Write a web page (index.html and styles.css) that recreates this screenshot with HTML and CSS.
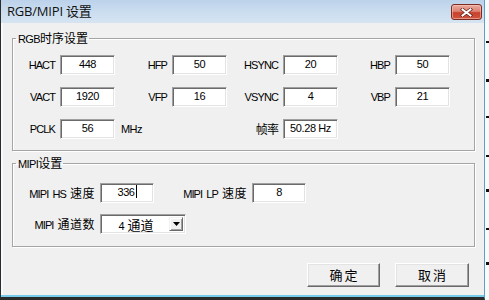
FILE: index.html
```html
<!DOCTYPE html>
<html lang="zh-CN">
<head>
<meta charset="utf-8">
<title>RGB/MIPI 设置</title>
<link rel="stylesheet" href="styles.css">
</head>
<body>
<div class="desk">
  <div class="window">
    <div class="titlebar">
      <span class="title">RGB/MIPI 设置</span>
      <span class="close">
        <svg width="13" height="9" viewBox="0 0 13 9"><path d="M2.5 1.5 L10.5 7.5 M10.5 1.5 L2.5 7.5" stroke="#5a1a12" stroke-width="3.4" stroke-linecap="square"/><path d="M2.5 1.5 L10.5 7.5 M10.5 1.5 L2.5 7.5" stroke="#fff" stroke-width="2" stroke-linecap="square"/></svg>
      </span>
    </div>
    <div class="client">
      <fieldset class="group rgb">
        <legend>RGB<span class="cjk">时序设置</span></legend>
        <div class="grid rgb-grid">
          <span class="lbl">HACT</span><span class="edit">448</span>
          <span class="lbl">HFP</span><span class="edit">50</span>
          <span class="lbl">HSYNC</span><span class="edit">20</span>
          <span class="lbl">HBP</span><span class="edit">50</span>

          <span class="lbl">VACT</span><span class="edit">1920</span>
          <span class="lbl">VFP</span><span class="edit">16</span>
          <span class="lbl">VSYNC</span><span class="edit">4</span>
          <span class="lbl">VBP</span><span class="edit">21</span>

          <span class="lbl">PCLK</span><span class="edit">56</span>
          <span class="unit">MHz</span><span class="blank"></span>
          <span class="lbl cjk">帧率</span><span class="edit">50.28 Hz</span>
        </div>
      </fieldset>

      <fieldset class="group mipi">
        <legend>MIPI<span class="cjk">设置</span></legend>
        <div class="grid mipi-grid">
          <span class="lbl">MIPI HS<span class="cjk sp">速度</span></span><span class="edit">336<span class="caret"></span></span>
          <span class="lbl">MIPI LP<span class="cjk sp">速度</span></span><span class="edit">8</span>

          <span class="lbl">MIPI<span class="cjk sp">通道数</span></span>
          <span class="combo">
            <span class="combo-text">4<span class="cjk">通道</span></span>
            <span class="combo-btn"><svg width="7" height="4" viewBox="0 0 7 4"><path d="M0 0 H7 L3.5 4 Z" fill="#000"/></svg></span>
          </span>
        </div>
      </fieldset>

      <div class="actions">
        <span class="btn ok">确定</span>
        <span class="btn cancel">取消</span>
      </div>
    </div>
  </div>
  <div class="edge"></div>
</div>
</body>
</html>
```

FILE: styles.css
```css
html, body {
  margin: 0;
  padding: 0;
  background: #ffffff;
}

body {
  font-family: "Liberation Sans", Arial, "Noto Sans CJK SC", sans-serif;
  font-size: 11px;
  color: #000;
}

.desk {
  display: flex;
  width: 489px;
  height: 300px;
  overflow: hidden;
}

.window {
  width: 485px;
  height: 300px;
  box-sizing: border-box;
  display: flex;
  flex-direction: column;
  border-left: 1px solid #2c2c2c;
  border-right: 1px solid #5c9fcc;
  border-bottom: 3px solid #2a2a2a;
  flex: none;
}

.edge {
  flex: 1;
  background:
    linear-gradient(#111, #111) 1px 41px / 3px 2px no-repeat,
    linear-gradient(#111, #111) 1px 79px / 3px 3px no-repeat,
    linear-gradient(#111, #111) 1px 116px / 3px 2px no-repeat,
    linear-gradient(#111, #111) 1px 155px / 3px 2px no-repeat,
    linear-gradient(#111, #111) 1px 189px / 3px 3px no-repeat,
    linear-gradient(#111, #111) 1px 228px / 3px 2px no-repeat,
    linear-gradient(#111, #111) 1px 262px / 3px 3px no-repeat,
    #fafafa;
}

.titlebar {
  height: 23px;
  flex: none;
  display: flex;
  align-items: flex-start;
  justify-content: space-between;
  background: linear-gradient(180deg, #bcd2ea 0%, #c9dcef 45%, #d6e4f2 100%);
}

.title {
  font-family: "Open Sans", "Noto Sans CJK SC", sans-serif;
  font-size: 13px;
  line-height: 16px;
  margin: 3px 0 0 6px;
  color: #111;
  letter-spacing: -0.2px;
}

.close {
  width: 31px;
  height: 16px;
  margin: 4px 2px 0 0;
  box-sizing: border-box;
  border: 1px solid #7c2b20;
  border-radius: 3px;
  background: linear-gradient(180deg, #e9aa9d 0%, #dd8272 45%, #c8412c 55%, #d0563f 100%);
  box-shadow: inset 0 0 0 1px rgba(255, 210, 200, 0.5);
  display: flex;
  align-items: center;
  justify-content: center;
}

.client {
  flex: 1;
  background: #f0f0f0;
  border-bottom: 2px solid #74cbec;
  box-shadow: inset 2px 0 0 #f7fafc;
  display: flex;
  flex-direction: column;
}

.cjk {
  font-family: "Noto Sans CJK SC", sans-serif;
  font-size: 12px;
  letter-spacing: 0;
}

.group {
  margin: 0 9px 0 11px;
  padding: 10px 3px 11px 3px;
  border: 1px solid #a5a5a5;
  box-shadow: inset 1px 1px 0 #ffffff, 1px 1px 0 #ffffff;
  min-inline-size: 0;
}

.group legend {
  padding: 0 1px 0 2px;
  line-height: 14px;
  height: 14px;
  font-size: 11px;
  letter-spacing: -0.6px;
}

.rgb {
  margin-top: 8px;
}

.mipi {
  margin-top: 5px;
  padding-top: 13px;
  padding-bottom: 12px;
}

.grid {
  display: grid;
  align-items: center;
}

.rgb-grid {
  grid-template-columns: 44px 55px 57px 55px 56px 55px 57px 55px;
  grid-auto-rows: 20px;
  row-gap: 12px;
}

.mipi-grid {
  grid-template-columns: 84px 54px 98px 54px;
  grid-auto-rows: 20px;
  row-gap: 11px;
}

.lbl {
  text-align: right;
  padding-right: 5px;
  letter-spacing: -0.9px;
  word-spacing: 2px;
  white-space: nowrap;
  line-height: 20px;
}

.lbl .cjk {
  letter-spacing: 0;
}

.lbl .sp {
  margin-left: 4px;
  letter-spacing: 0.5px;
}

.unit {
  padding-left: 6px;
  letter-spacing: -0.6px;
}

.edit {
  height: 20px;
  box-sizing: border-box;
  background: #fff;
  border: 1px solid;
  border-color: #a0a0a0 #ffffff #ffffff #a0a0a0;
  box-shadow: inset 1px 1px 0 #6a6a6a, inset -1px -1px 0 #e3e3e3;
  text-align: center;
  line-height: 17px;
  letter-spacing: -0.4px;
  white-space: nowrap;
}

.caret {
  display: inline-block;
  width: 1px;
  height: 13px;
  background: #000;
  vertical-align: -2px;
  margin-left: 1px;
}

.combo {
  grid-column: 2 / span 2;
  width: 86px;
  height: 20px;
  box-sizing: border-box;
  background: #fff;
  border: 1px solid;
  border-color: #a0a0a0 #ffffff #ffffff #a0a0a0;
  box-shadow: inset 1px 1px 0 #6a6a6a, inset -1px -1px 0 #e3e3e3;
  display: flex;
  align-items: stretch;
  padding: 2px;
}

.combo-text {
  flex: 1;
  text-align: center;
  line-height: 15px;
  white-space: nowrap;
}

.combo-text .cjk {
  font-size: 13px;
  margin-left: 3px;
}

.combo-btn {
  width: 14px;
  box-sizing: border-box;
  background: #f0f0f0;
  border: 1px solid;
  border-color: #f0f0f0 #6a6a6a #6a6a6a #f0f0f0;
  box-shadow: inset 1px 1px 0 #ffffff, inset -1px -1px 0 #a0a0a0;
  display: flex;
  align-items: center;
  justify-content: center;
}

.actions {
  display: flex;
  justify-content: flex-end;
  gap: 15px;
  margin: 16px 15px 0 0;
}

.btn {
  width: 73px;
  height: 24px;
  box-sizing: border-box;
  background: #f0f0f0;
  border: 1px solid;
  border-color: #ffffff #696969 #696969 #ffffff;
  box-shadow: inset -1px -1px 0 #a0a0a0, inset 1px 1px 0 #e3e3e3;
  font-family: "Noto Sans CJK SC", sans-serif;
  font-size: 13px;
  letter-spacing: 2px;
  text-indent: 2px;
  line-height: 21px;
  text-align: center;
}

.btn.cancel {
  width: 74px;
}
```
